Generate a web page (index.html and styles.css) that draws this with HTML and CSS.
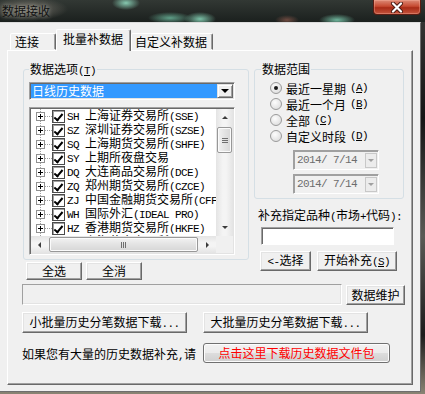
FILE: index.html
```html
<!DOCTYPE html>
<html lang="zh-CN">
<head>
    <meta charset="UTF-8">
    <meta name="viewport" content="width=device-width, initial-scale=1.0">
    <title>数据接收</title>
    <link rel="stylesheet" href="styles.css">
</head>
<body>
    <div class="titlebar">
        <span class="title">数据接收</span>
        <div class="close-btn">
            <svg width="14" height="11" viewBox="0 0 14 11">
                <path d="M3 1.5 L11 9.5 M11 1.5 L3 9.5" stroke="#4a1a12" stroke-width="4" stroke-linecap="round"/>
                <path d="M3 1.5 L11 9.5 M11 1.5 L3 9.5" stroke="#fff" stroke-width="2.2" stroke-linecap="round"/>
            </svg>
        </div>
    </div>

    <div class="window">
        <div class="tabs">
            <div class="tab tab-conn">连接</div>
            <div class="tab tab-batch active">批量补数据</div>
            <div class="tab tab-custom">自定义补数据</div>
        </div>

        <div class="tab-panel">
            <div class="top-row">
                <div class="left-col">
                    <fieldset class="group options">
                        <legend>数据选项<span class="lat">(<u>T</u>)</span></legend>
                        <div class="combo">
                            <div class="combo-value">日线历史数据</div>
                            <div class="combo-arrow"><span class="tri"></span></div>
                        </div>
                        <div class="listbox">
                            <div class="list-main">
                                <div class="list-rows">
                                    <div class="row"><span class="exp"></span><span class="hline"></span><span class="chk"></span><span class="label"><span class="lat">SH&nbsp;</span>上海证券交易所<span class="lat">(SSE)</span></span></div>
                                    <div class="row"><span class="exp"></span><span class="hline"></span><span class="chk"></span><span class="label"><span class="lat">SZ&nbsp;</span>深圳证券交易所<span class="lat">(SZSE)</span></span></div>
                                    <div class="row"><span class="exp"></span><span class="hline"></span><span class="chk"></span><span class="label"><span class="lat">SQ&nbsp;</span>上海期货交易所<span class="lat">(SHFE)</span></span></div>
                                    <div class="row"><span class="exp"></span><span class="hline"></span><span class="chk"></span><span class="label"><span class="lat">SY&nbsp;</span>上期所夜盘交易</span></div>
                                    <div class="row"><span class="exp"></span><span class="hline"></span><span class="chk"></span><span class="label"><span class="lat">DQ&nbsp;</span>大连商品交易所<span class="lat">(DCE)</span></span></div>
                                    <div class="row"><span class="exp"></span><span class="hline"></span><span class="chk"></span><span class="label"><span class="lat">ZQ&nbsp;</span>郑州期货交易所<span class="lat">(CZCE)</span></span></div>
                                    <div class="row"><span class="exp"></span><span class="hline"></span><span class="chk"></span><span class="label"><span class="lat">ZJ&nbsp;</span>中国金融期货交易所<span class="lat">(CFFEX)</span></span></div>
                                    <div class="row"><span class="exp"></span><span class="hline"></span><span class="chk"></span><span class="label"><span class="lat">WH&nbsp;</span>国际外汇<span class="lat">(IDEAL PRO)</span></span></div>
                                    <div class="row"><span class="exp"></span><span class="hline"></span><span class="chk"></span><span class="label"><span class="lat">HZ&nbsp;</span>香港期货交易所<span class="lat">(HKFE)</span></span></div>
                                    <div class="row"><span class="exp"></span><span class="hline"></span><span class="chk"></span><span class="label"><span class="lat">SG&nbsp;</span>上海黄金交易所<span class="lat">(SGE)</span></span></div>
                                </div>
                                <div class="vscroll">
                                    <div class="sb-btn"><span class="tri tri-up"></span></div>
                                    <div class="sb-track"><div class="thumb thumb-v"></div></div>
                                    <div class="sb-btn"><span class="tri tri-down"></span></div>
                                </div>
                            </div>
                            <div class="hscroll-row">
                                <div class="hscroll">
                                    <div class="sb-btn"><span class="tri tri-left"></span></div>
                                    <div class="sb-track"><div class="thumb thumb-h"></div></div>
                                    <div class="sb-btn"><span class="tri tri-right"></span></div>
                                </div>
                                <div class="sb-corner"></div>
                            </div>
                        </div>
                    </fieldset>
                    <div class="btn-row sel-row">
                        <button class="btn sel-btn">全选</button>
                        <button class="btn sel-btn">全消</button>
                    </div>
                </div>

                <div class="right-col">
                    <fieldset class="group range">
                        <legend>数据范围</legend>
                        <div class="radio checked"><span class="circle"></span>最近一星期<span class="lat">(<u>A</u>)</span></div>
                        <div class="radio"><span class="circle"></span>最近一个月<span class="lat">(<u>B</u>)</span></div>
                        <div class="radio"><span class="circle"></span>全部<span class="lat">(<u>C</u>)</span></div>
                        <div class="radio"><span class="circle"></span>自定义时段<span class="lat">(<u>D</u>)</span></div>
                        <div class="date-pick first">
                            <span class="lat date-text">2014/ 7/14</span>
                            <span class="date-arrow"><span class="tri"></span></span>
                        </div>
                        <div class="date-pick">
                            <span class="lat date-text">2014/ 7/14</span>
                            <span class="date-arrow"><span class="tri"></span></span>
                        </div>
                    </fieldset>
                    <div class="code-label">补充指定品种<span class="lat">(</span>市场<span class="lat">+</span>代码<span class="lat">):</span></div>
                    <input class="code-input" type="text">
                    <div class="btn-row pick-row">
                        <button class="btn pick-btn"><span class="lat">&lt;-</span>选择</button>
                        <button class="btn start-btn">开始补充<span class="lat">(<u>S</u>)</span></button>
                    </div>
                </div>
            </div>

            <div class="maint-row">
                <div class="status-field"></div>
                <button class="btn maint-btn">数据维护</button>
            </div>

            <div class="dl-row">
                <button class="btn dl-btn">小批量历史分笔数据下载<span class="lat">...</span></button>
                <button class="btn dl-btn">大批量历史分笔数据下载<span class="lat">...</span></button>
            </div>

            <div class="pkg-row">
                <span class="pkg-text">如果您有大量的历史数据补充<span class="lat">,</span>请</span>
                <button class="pkg-btn">点击这里下载历史数据文件包</button>
            </div>
        </div>
    </div>
</body>
</html>
```

FILE: styles.css
```css
* {
    box-sizing: border-box;
}

body {
    margin: 0;
    width: 425px;
    height: 394px;
    overflow: hidden;
    font-family: "Noto Sans CJK SC", sans-serif;
    font-size: 12px;
    color: #000;
    background: linear-gradient(#3a3a38, #151515 30%, #5a5a55 60%, #1c1c1c 85%, #8a8474);
}

.lat {
    font-family: "Liberation Mono", monospace;
    font-size: 11px;
    letter-spacing: -0.6px;
    white-space: pre;
}

/* title bar */

.titlebar {
    height: 22px;
    display: flex;
    justify-content: space-between;
    align-items: flex-start;
    background:
        radial-gradient(ellipse 14px 7px at 126px 3px, #86c9b0, transparent),
        radial-gradient(ellipse 22px 6px at 170px 18px, #5f9f88, transparent),
        radial-gradient(ellipse 16px 7px at 200px 19px, #7cc2a8, transparent),
        radial-gradient(ellipse 12px 5px at 287px 20px, #6e4a40, transparent),
        radial-gradient(ellipse 18px 6px at 337px 20px, #6fb59c, transparent),
        radial-gradient(ellipse 40px 12px at 28px 9px, #77736a, transparent),
        linear-gradient(#323834, #1b201e);
}

.title {
    padding: 3px 0 0 2px;
    line-height: 16px;
    color: #101010;
    text-shadow: 0 0 4px rgba(200, 200, 190, 0.8);
}

.close-btn {
    width: 48px;
    height: 15px;
    margin-right: 4px;
    display: flex;
    align-items: center;
    justify-content: center;
    border: 1px solid #5b1c12;
    border-top: none;
    border-radius: 0 0 4px 4px;
    background: linear-gradient(#dc8a76, #c64a31 45%, #a82b16 55%, #c4553e);
    box-shadow: inset 0 0 0 1px rgba(255, 190, 170, 0.35);
}

/* window */

.window {
    width: 421px;
    height: 370px;
    padding: 6px 0 0 7px;
    background: #f0f0f0;
    border-top: 1px solid #dcdcdc;
    border-right: 1px solid #6e6e6e;
    border-bottom: 1px solid #6e6e6e;
}

.tabs {
    display: flex;
    align-items: flex-end;
    height: 21px;
}

.tab {
    height: 17px;
    line-height: 15px;
    border: 1px solid;
    border-color: #fff #696969 transparent #fff;
    border-radius: 2px 2px 0 0;
    box-shadow: inset -1px 0 #a0a0a0;
    background: #f0f0f0;
    white-space: nowrap;
}

.tab-conn {
    margin-left: 3px;
    width: 46px;
    padding: 0 0 0 4px;
}

.tab-batch {
    width: 75px;
    padding: 0 0 0 6px;
}

.tab-custom {
    width: 82px;
    padding: 0 0 0 3px;
}

.tab.active {
    position: relative;
    z-index: 1;
    height: 22px;
    margin-bottom: -1px;
    line-height: 18px;
    border-bottom: none;
}

.tab-panel {
    width: 406px;
    height: 335px;
    padding-top: 12px;
    border: 1px solid;
    border-color: #fff #696969 #696969 #fff;
    box-shadow: inset -1px -1px #a0a0a0;
}

.top-row {
    display: flex;
    gap: 5px;
    padding-left: 15px;
}

.left-col {
    width: 226px;
}

.right-col {
    width: 150px;
}

.group {
    margin: 0;
    min-width: 0;
    border: 1px solid #d5dfe5;
    border-radius: 3px;
}

.group legend {
    padding: 0 1px;
    line-height: 12px;
    height: 12px;
}

.options {
    padding: 7px 13px 4px 5px;
}

.range {
    padding: 5px 4px 4px 15px;
}

.range legend {
    margin-left: -9px;
}

/* combo */

.combo {
    display: flex;
    height: 18px;
    padding: 1px;
    border: 1px solid;
    border-color: #a0a0a0 #fff #fff #a0a0a0;
    box-shadow: inset 1px 1px #696969, inset -1px -1px #e3e3e3;
    background: #fff;
}

.combo-value {
    flex: 1;
    padding-left: 1px;
    line-height: 14px;
    color: #fff;
    background: #3399ff;
}

.combo-arrow {
    width: 16px;
    display: flex;
    align-items: center;
    justify-content: center;
    border: 1px solid;
    border-color: #e3e3e3 #696969 #696969 #e3e3e3;
    box-shadow: inset 1px 1px #fff, inset -1px -1px #a0a0a0;
    background: #f0f0f0;
}

.tri {
    width: 0;
    height: 0;
    border-left: 4px solid transparent;
    border-right: 4px solid transparent;
    border-top: 4px solid #000;
}

/* list */

.listbox {
    margin-top: 7px;
    width: 206px;
    height: 148px;
    border: 1px solid;
    border-color: #a0a0a0 #fff #fff #a0a0a0;
    box-shadow: inset 1px 1px #696969, inset -1px -1px #e3e3e3;
    padding: 1px;
    display: flex;
    flex-direction: column;
}

.list-main {
    display: flex;
    height: 127px;
}

.list-rows {
    flex: 1;
    overflow: hidden;
    background: #fff;
}

.row {
    display: flex;
    align-items: center;
    height: 14px;
    padding-left: 5px;
    white-space: nowrap;
    background: linear-gradient(#a0a0a0 50%, transparent 50%) 9px 0 / 1px 2px repeat-y;
}

.exp {
    flex: none;
    width: 9px;
    height: 9px;
    border: 1px solid #919191;
    background:
        linear-gradient(#000, #000) center / 5px 1px no-repeat,
        linear-gradient(#000, #000) center / 1px 5px no-repeat,
        #fff;
}

.hline {
    flex: none;
    width: 7px;
    height: 1px;
    background: repeating-linear-gradient(90deg, #a0a0a0 0 1px, transparent 1px 2px);
}

.chk {
    flex: none;
    width: 13px;
    height: 13px;
    border: 1px solid #4a4a4a;
    box-shadow: inset 1px 1px #a0a0a0;
    background: #fff;
    display: flex;
    justify-content: center;
}

.chk::after {
    content: "";
    width: 3px;
    height: 7px;
    margin-top: 1px;
    border: solid #000;
    border-width: 0 2px 2px 0;
    transform: rotate(40deg);
}

.label {
    margin-left: 2px;
    line-height: 14px;
}

/* scrollbars */

.vscroll {
    width: 17px;
    display: flex;
    flex-direction: column;
    background: linear-gradient(90deg, #e4e4e4, #f4f4f4 40%, #f4f4f4 60%, #e4e4e4);
}

.sb-btn {
    flex: none;
    width: 17px;
    height: 17px;
    display: flex;
    align-items: center;
    justify-content: center;
}

.sb-track {
    flex: 1;
    display: flex;
}

.vscroll .sb-track {
    flex-direction: column;
}

.tri-up {
    border-top: none;
    border-bottom: 3px solid #3c3c3c;
    border-left-width: 3px;
    border-right-width: 3px;
}

.tri-down {
    border-top: 3px solid #3c3c3c;
    border-left-width: 3px;
    border-right-width: 3px;
}

.tri-left {
    border: 3px solid transparent;
    border-left: none;
    border-right: 3px solid #3c3c3c;
}

.tri-right {
    border: 3px solid transparent;
    border-right: none;
    border-left: 3px solid #3c3c3c;
}

.thumb {
    border: 1px solid #989898;
    border-radius: 2px;
    box-shadow: inset 0 0 0 1px #fbfbfb;
}

.thumb-v {
    margin: 1px 1px 0;
    height: 26px;
    background:
        repeating-linear-gradient(#6e6e6e 0 1px, transparent 1px 2px) center / 6px 5px no-repeat,
        linear-gradient(90deg, #f2f2f2, #e3e3e3 50%, #d6d6d6);
}

.thumb-h {
    flex: 1;
    margin: 1px 1px;
    background:
        repeating-linear-gradient(90deg, #6e6e6e 0 1px, transparent 1px 2px) center / 5px 6px no-repeat,
        linear-gradient(#f2f2f2, #e3e3e3 50%, #d6d6d6);
}

.hscroll-row {
    display: flex;
    height: 17px;
}

.hscroll {
    flex: 1;
    display: flex;
    background: linear-gradient(#e4e4e4, #f4f4f4 40%, #f4f4f4 60%, #e4e4e4);
}

.sb-corner {
    width: 17px;
    background: #f0f0f0;
}

/* buttons */

.btn {
    font-family: "Noto Sans CJK SC", sans-serif;
    font-size: 12px;
    color: #000;
    padding: 0;
    line-height: 14px;
    background: #f0f0f0;
    border: 1px solid;
    border-color: #fff #696969 #696969 #fff;
    box-shadow: inset -1px -1px #a0a0a0, inset 1px 1px #e3e3e3;
    white-space: nowrap;
}

.btn-row {
    display: flex;
}

.sel-row {
    margin-top: 2px;
    padding-left: 3px;
    gap: 4px;
}

.sel-btn {
    width: 56px;
    height: 18px;
}

/* radios and dates */

.radio {
    display: flex;
    align-items: center;
    gap: 4px;
    height: 16px;
    white-space: nowrap;
}

.circle {
    width: 12px;
    height: 12px;
    border-radius: 50%;
    border: 1px solid #9a9a9a;
    background: radial-gradient(circle at 40% 35%, #fdfdfd, #e2e2e2 70%, #cfcfcf);
    display: flex;
    align-items: center;
    justify-content: center;
}

.radio.checked .circle::after {
    content: "";
    width: 4px;
    height: 4px;
    border-radius: 50%;
    background: #1a1a1a;
}

.date-pick {
    display: flex;
    align-items: center;
    justify-content: space-between;
    width: 86px;
    height: 20px;
    margin: 4px 0 0 23px;
    padding: 0 1px 0 3px;
    border: 1px solid;
    border-color: #a0a0a0 #fff #fff #a0a0a0;
    box-shadow: inset 1px 1px #a0a0a0;
    background: #f0f0f0;
}

.date-pick.first {
    margin-top: 6px;
}

.date-text {
    color: #6d6d6d;
}

.date-arrow {
    width: 12px;
    height: 15px;
    display: flex;
    align-items: center;
    justify-content: center;
    border: 1px solid #c8c8c8;
    background: #ececec;
}

.date-arrow .tri {
    border-left-width: 3px;
    border-right-width: 3px;
    border-top: 3px solid #a0a0a0;
}

.code-label {
    margin-top: 10px;
    padding-left: 4px;
    line-height: 12px;
    white-space: nowrap;
}

.code-input {
    display: block;
    margin: 4px 0 0 7px;
    width: 133px;
    height: 18px;
    border: 1px solid;
    border-color: #a0a0a0 #fff #fff #a0a0a0;
    box-shadow: inset 1px 1px #696969;
    background: #fff;
    outline: none;
}

.pick-row {
    margin-top: 6px;
    padding-left: 6px;
    gap: 6px;
}

.pick-btn {
    width: 51px;
    height: 20px;
}

.start-btn {
    width: 80px;
    height: 20px;
}

/* bottom rows */

.maint-row {
    display: flex;
    align-items: center;
    gap: 4px;
    margin-top: 4px;
    padding-left: 14px;
}

.status-field {
    width: 320px;
    height: 21px;
    border: 1px solid;
    border-color: #a0a0a0 #fff #fff #a0a0a0;
    box-shadow: inset -1px -1px #e3e3e3;
    background: #f0f0f0;
}

.maint-btn {
    width: 59px;
    height: 20px;
}

.dl-row {
    display: flex;
    gap: 16px;
    margin-top: 7px;
    padding-left: 14px;
}

.dl-btn {
    width: 165px;
    height: 21px;
}

.pkg-row {
    display: flex;
    align-items: center;
    margin-top: 10px;
    padding-left: 14px;
}

.pkg-text {
    width: 181px;
    white-space: nowrap;
}

.pkg-btn {
    width: 187px;
    height: 20px;
    padding: 0;
    font-family: "Noto Sans CJK SC", sans-serif;
    font-size: 12px;
    line-height: 14px;
    color: #ff0000;
    border: 1px solid #707070;
    border-radius: 3px;
    background: linear-gradient(#f2f2f2, #ebebeb 50%, #dddddd 51%, #cfcfcf);
    box-shadow: inset 0 0 0 1px #fcfcfc;
}
```
